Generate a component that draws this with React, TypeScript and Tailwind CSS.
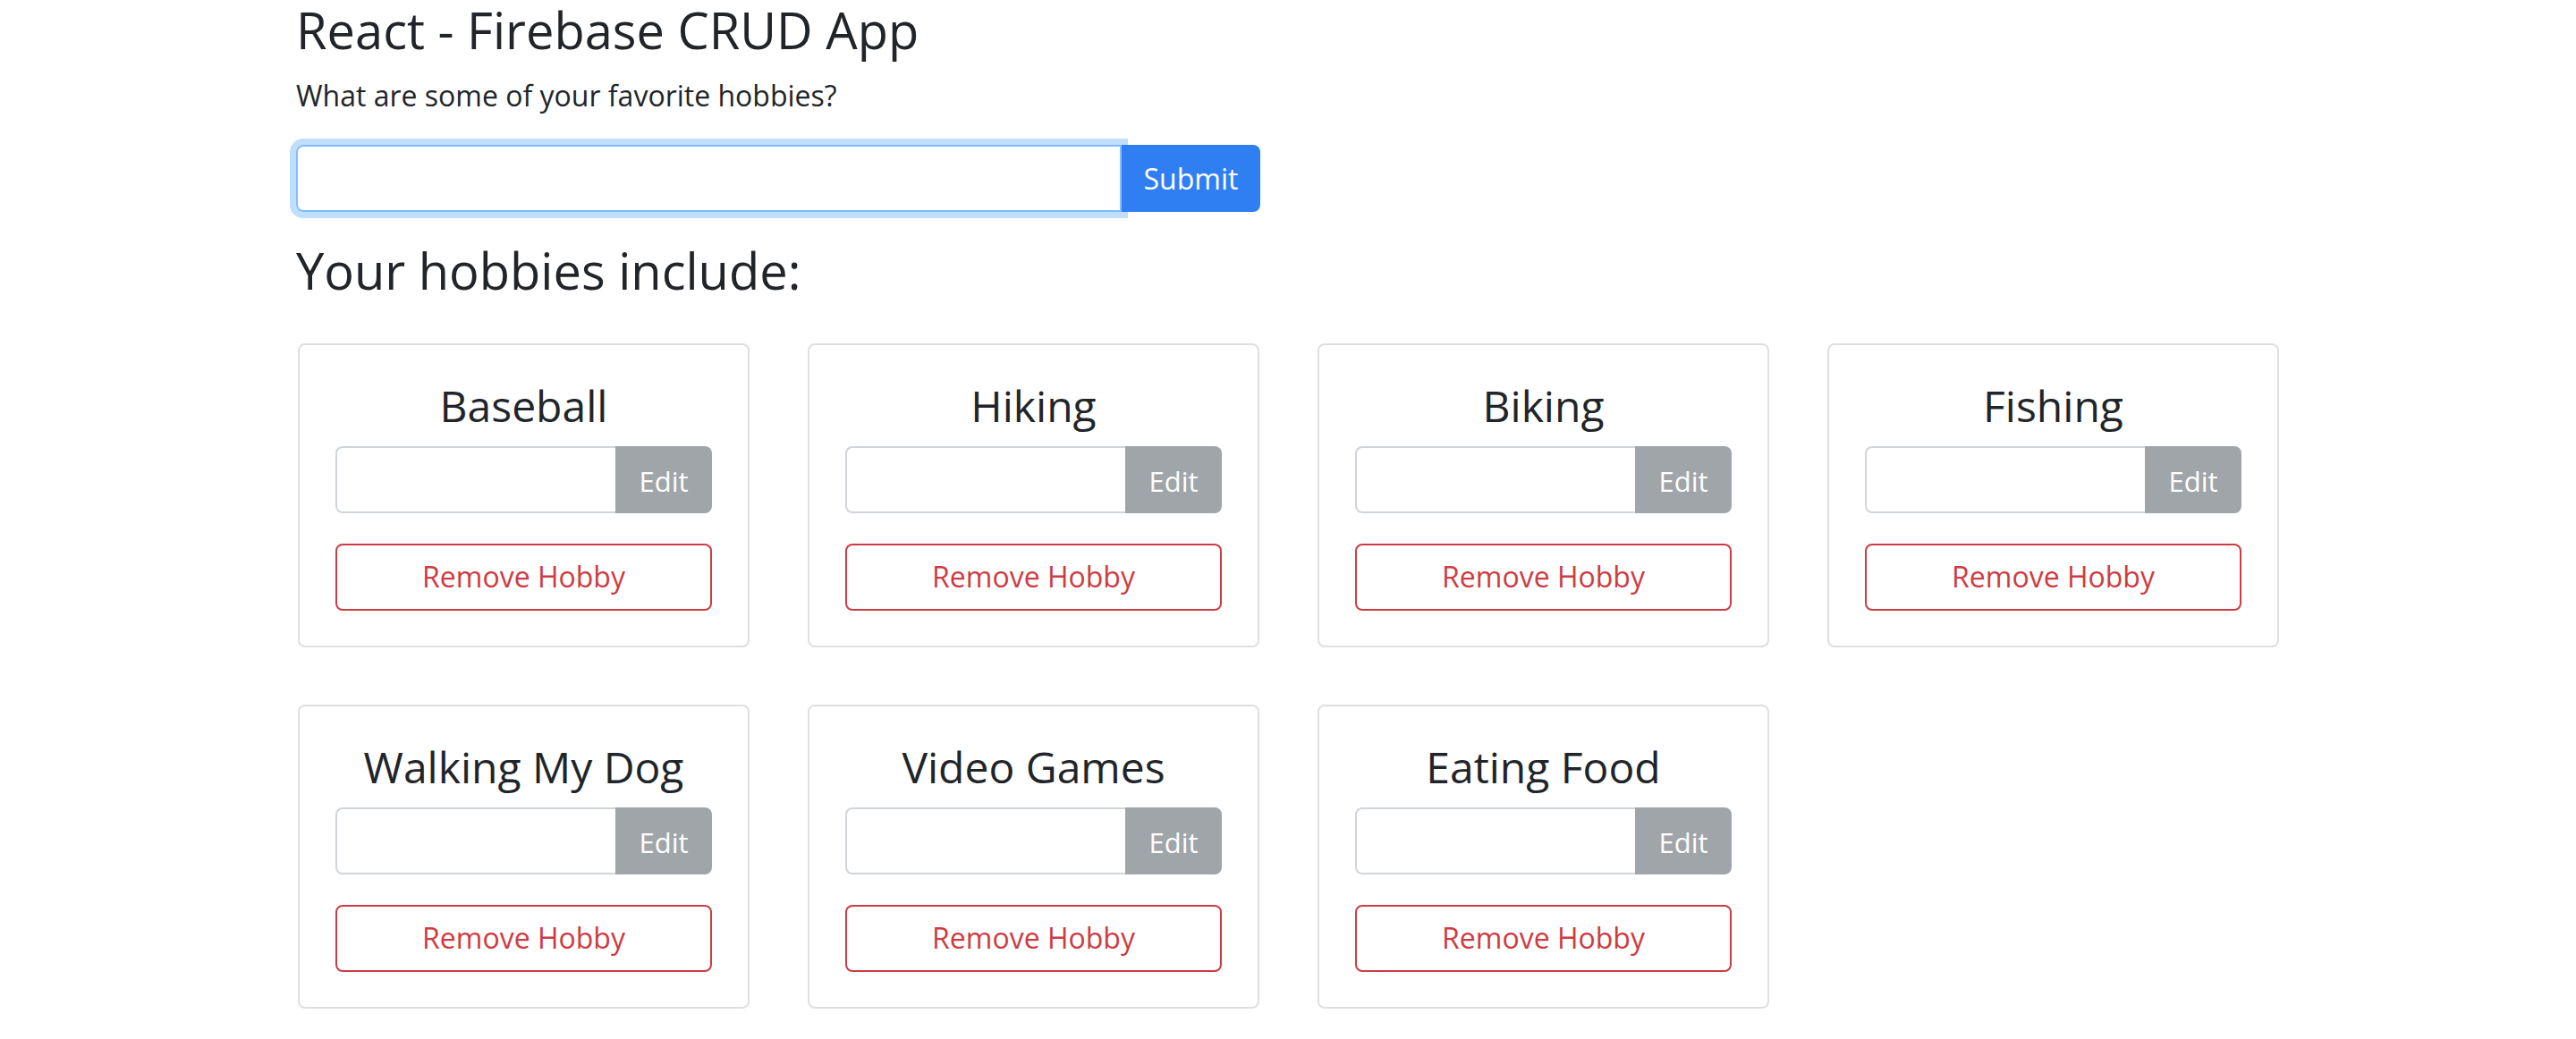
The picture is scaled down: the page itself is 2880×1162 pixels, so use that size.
import React, { useState } from "react";

type Hobby = {
  id: number;
  name: string;
};

const initialHobbies: Hobby[] = [
  { id: 1, name: "Baseball" },
  { id: 2, name: "Hiking" },
  { id: 3, name: "Biking" },
  { id: 4, name: "Fishing" },
  { id: 5, name: "Walking My Dog" },
  { id: 6, name: "Video Games" },
  { id: 7, name: "Eating Food" },
];

function HobbyCard({
  hobby,
  onRemove,
}: {
  hobby: Hobby;
  onRemove: (id: number) => void;
}) {
  const [edit, setEdit] = useState("");

  return (
    <div className="border-2 border-[#dfdfdf] rounded-[8px] px-[40px] pt-[39px] pb-[39px] bg-white">
      <h4 className="text-center text-[48px] leading-[1.2] font-normal mb-[16px]">
        {hobby.name}
      </h4>

      {/* Edit */}
      <div className="flex h-[75px]">
        <input
          type="text"
          value={edit}
          onChange={(e) => setEdit(e.target.value)}
          className="flex-1 min-w-0 border-2 border-r-0 border-[#d0d5da] rounded-l-[8px] px-[23px] text-[32px] outline-none"
        />
        <button
          disabled
          className="w-[108px] bg-[#a0a5a9] text-white text-[31px] rounded-r-[8px] pt-[4px]"
        >
          Edit
        </button>
      </div>

      {/* Remove */}
      <button
        onClick={() => onRemove(hobby.id)}
        className="mt-[34px] w-full h-[75px] border-2 border-[#cd3c44] text-[#cd3c44] rounded-[8px] text-[32px] cursor-pointer"
      >
        Remove Hobby
      </button>
    </div>
  );
}

export default function App() {
  const [hobbies, setHobbies] = useState<Hobby[]>(initialHobbies);
  const [newHobby, setNewHobby] = useState("");

  const handleSubmit = (e: React.FormEvent) => {
    e.preventDefault();
    if (!newHobby.trim()) return;
    setHobbies([...hobbies, { id: Date.now(), name: newHobby }]);
    setNewHobby("");
  };

  const handleRemove = (id: number) => {
    setHobbies(hobbies.filter((h) => h.id !== id));
  };

  return (
    <div className="min-h-screen bg-white text-[#212529] font-['Open_Sans',sans-serif]">
      <div className="pl-[331px] w-[2600px]">
        <h3 className="text-[56px] leading-[1.2] font-normal mb-[16px]">
          React - Firebase CRUD App
        </h3>
        <p className="text-[32px] leading-[1.5] mb-[31px]">
          What are some of your favorite hobbies?
        </p>

        <form onSubmit={handleSubmit} className="flex w-[1078px] h-[75px]">
          <input
            type="text"
            value={newHobby}
            onChange={(e) => setNewHobby(e.target.value)}
            className="flex-1 min-w-0 border-2 border-[#80bdff] rounded-l-[8px] px-[23px] text-[32px] outline-none shadow-[0_0_0_7px_#c0defe]"
          />
          <button
            type="submit"
            className="relative w-[155px] bg-[#2f7ff3] text-white text-[32px] rounded-r-[8px] cursor-pointer"
          >
            Submit
          </button>
        </form>

        <h3 className="mt-[32px] mb-[48px] text-[56px] leading-[1.2] font-normal">
          Your hobbies include:
        </h3>

        <div className="ml-[2px] grid grid-cols-[repeat(4,505px)] gap-x-[65px] gap-y-[64px]">
          {hobbies.map((hobby) => (
            <HobbyCard key={hobby.id} hobby={hobby} onRemove={handleRemove} />
          ))}
        </div>
      </div>
    </div>
  );
}
